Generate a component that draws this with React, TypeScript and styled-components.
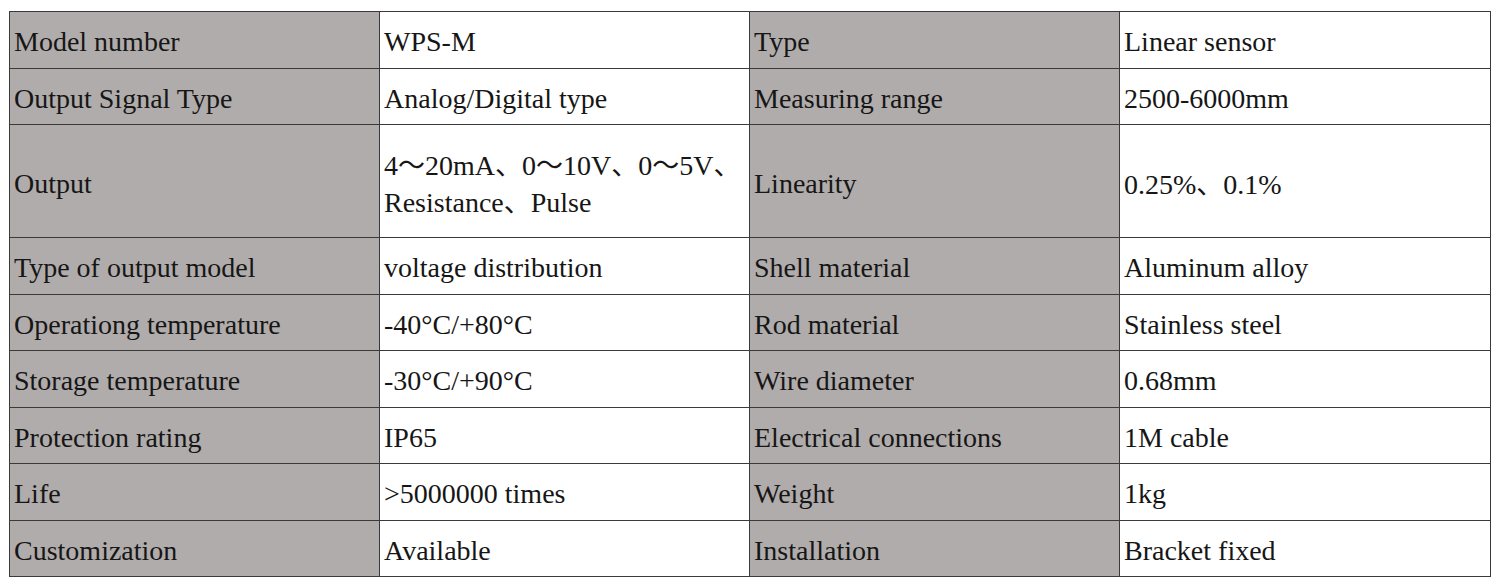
import React from 'react';
import styled, { createGlobalStyle } from 'styled-components';

const ROWS: { cells: [string, string, string, string]; tall?: boolean }[] = [
  { cells: ['Model number', 'WPS-M', 'Type', 'Linear sensor'] },
  { cells: ['Output Signal Type', 'Analog/Digital type', 'Measuring range', '2500-6000mm'] },
  {
    cells: ['Output', '4～20mA、0～10V、0～5V、Resistance、Pulse', 'Linearity', '0.25%、0.1%'],
    tall: true,
  },
  { cells: ['Type of output model', 'voltage distribution', 'Shell material', 'Aluminum alloy'] },
  { cells: ['Operationg temperature', '-40°C/+80°C', 'Rod material', 'Stainless steel'] },
  { cells: ['Storage temperature', '-30°C/+90°C', 'Wire diameter', '0.68mm'] },
  { cells: ['Protection rating', 'IP65', 'Electrical connections', '1M cable'] },
  { cells: ['Life', '>5000000 times', 'Weight', '1kg'] },
  { cells: ['Customization', 'Available', 'Installation', 'Bracket fixed'] },
];

// keep the full-width marks in a CJK face so the latin text stays serif
const renderText = (text: string) =>
  text.split(/([～、])/).map((part, i) =>
    part === '～' || part === '、' ? <Mark key={i}>{part}</Mark> : <span key={i}>{part}</span>,
  );

const GlobalStyle = createGlobalStyle`
  html, body {
    margin: 0;
    padding: 0;
    background: #ffffff;
  }
`;

export default function App() {
  return (
    <Page>
      <GlobalStyle />
      <SpecTable>
        <colgroup>
          <col width={370} />
          <col width={370} />
          <col width={370} />
          <col width={371} />
        </colgroup>
        <tbody>
          {ROWS.map(row => (
            <Row key={row.cells[0]} $tall={row.tall}>
              {row.cells.map((text, i) => (
                <Cell key={i} $label={i % 2 === 0}>
                  {renderText(text)}
                </Cell>
              ))}
            </Row>
          ))}
        </tbody>
      </SpecTable>
    </Page>
  );
}

const Page = styled.div`
  padding: 11px 0 0 9px;
  width: 1500px;
  height: 585px;
  box-sizing: border-box;
  background: #ffffff;
`;

const SpecTable = styled.table`
  border-collapse: collapse;
  table-layout: fixed;
  width: 1482px;
  border: 1px solid #3a3a3a;
`;

const Row = styled.tr<{ $tall?: boolean }>`
  height: ${props => (props.$tall ? '113px' : '56.5px')};
`;

const Cell = styled.td<{ $label: boolean }>`
  border: 1px solid #3a3a3a;
  background: ${props => (props.$label ? '#b0acab' : '#ffffff')};
  color: #161616;
  font-family: 'Liberation Serif', 'Times New Roman', serif;
  font-size: 28px;
  line-height: 35px;
  padding: 4px 0 0 4px;
  vertical-align: middle;
  text-align: left;
  box-sizing: border-box;
`;

const Mark = styled.span`
  font-family: 'Noto Sans CJK SC', sans-serif;
  font-size: 27px;
`;
